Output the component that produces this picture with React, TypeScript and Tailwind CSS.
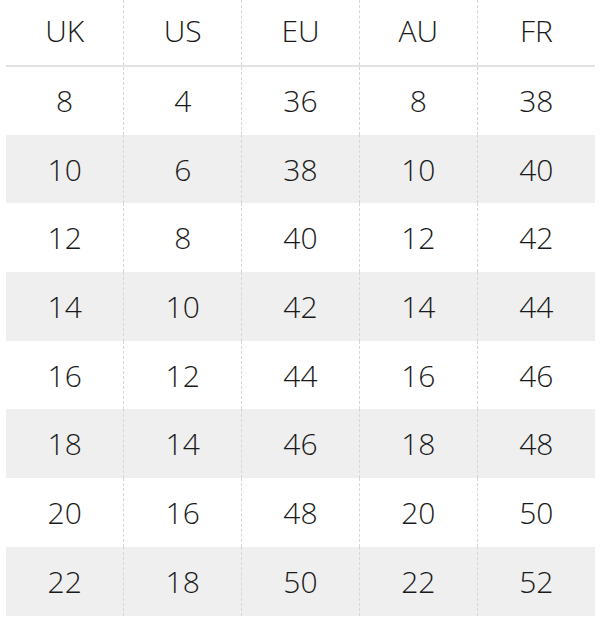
const headers = ["UK", "US", "EU", "AU", "FR"];

const rows = [
  ["8", "4", "36", "8", "38"],
  ["10", "6", "38", "10", "40"],
  ["12", "8", "40", "12", "42"],
  ["14", "10", "42", "14", "44"],
  ["16", "12", "44", "16", "46"],
  ["18", "14", "46", "18", "48"],
  ["20", "16", "48", "20", "50"],
  ["22", "18", "50", "22", "52"],
];

export default function App() {
  return (
    <div className="h-[629px] w-[600px] bg-white pl-[6px] font-['Open_Sans',sans-serif] font-light text-[#1a1a1a]">
      <table className="w-[589px] table-fixed border-collapse text-center text-[30px]">
        <thead>
          <tr className="h-[66px] border-b-2 border-[#e3e3e3]">
            {headers.map((h, i) => (
              <th
                key={h}
                className={`pb-[5px] font-light ${i > 0 ? "border-l border-dashed border-l-[#d6d6d6]" : ""}`}
              >
                {h}
              </th>
            ))}
          </tr>
        </thead>
        <tbody>
          {rows.map((row, r) => (
            <tr key={r} className={`h-[68.7px] ${r % 2 === 1 ? "bg-[#efefef]" : "bg-white"}`}>
              {row.map((cell, i) => (
                <td
                  key={i}
                  className={i > 0 ? "border-l border-dashed border-l-[#d6d6d6]" : ""}
                >
                  {cell}
                </td>
              ))}
            </tr>
          ))}
        </tbody>
      </table>
    </div>
  );
}
